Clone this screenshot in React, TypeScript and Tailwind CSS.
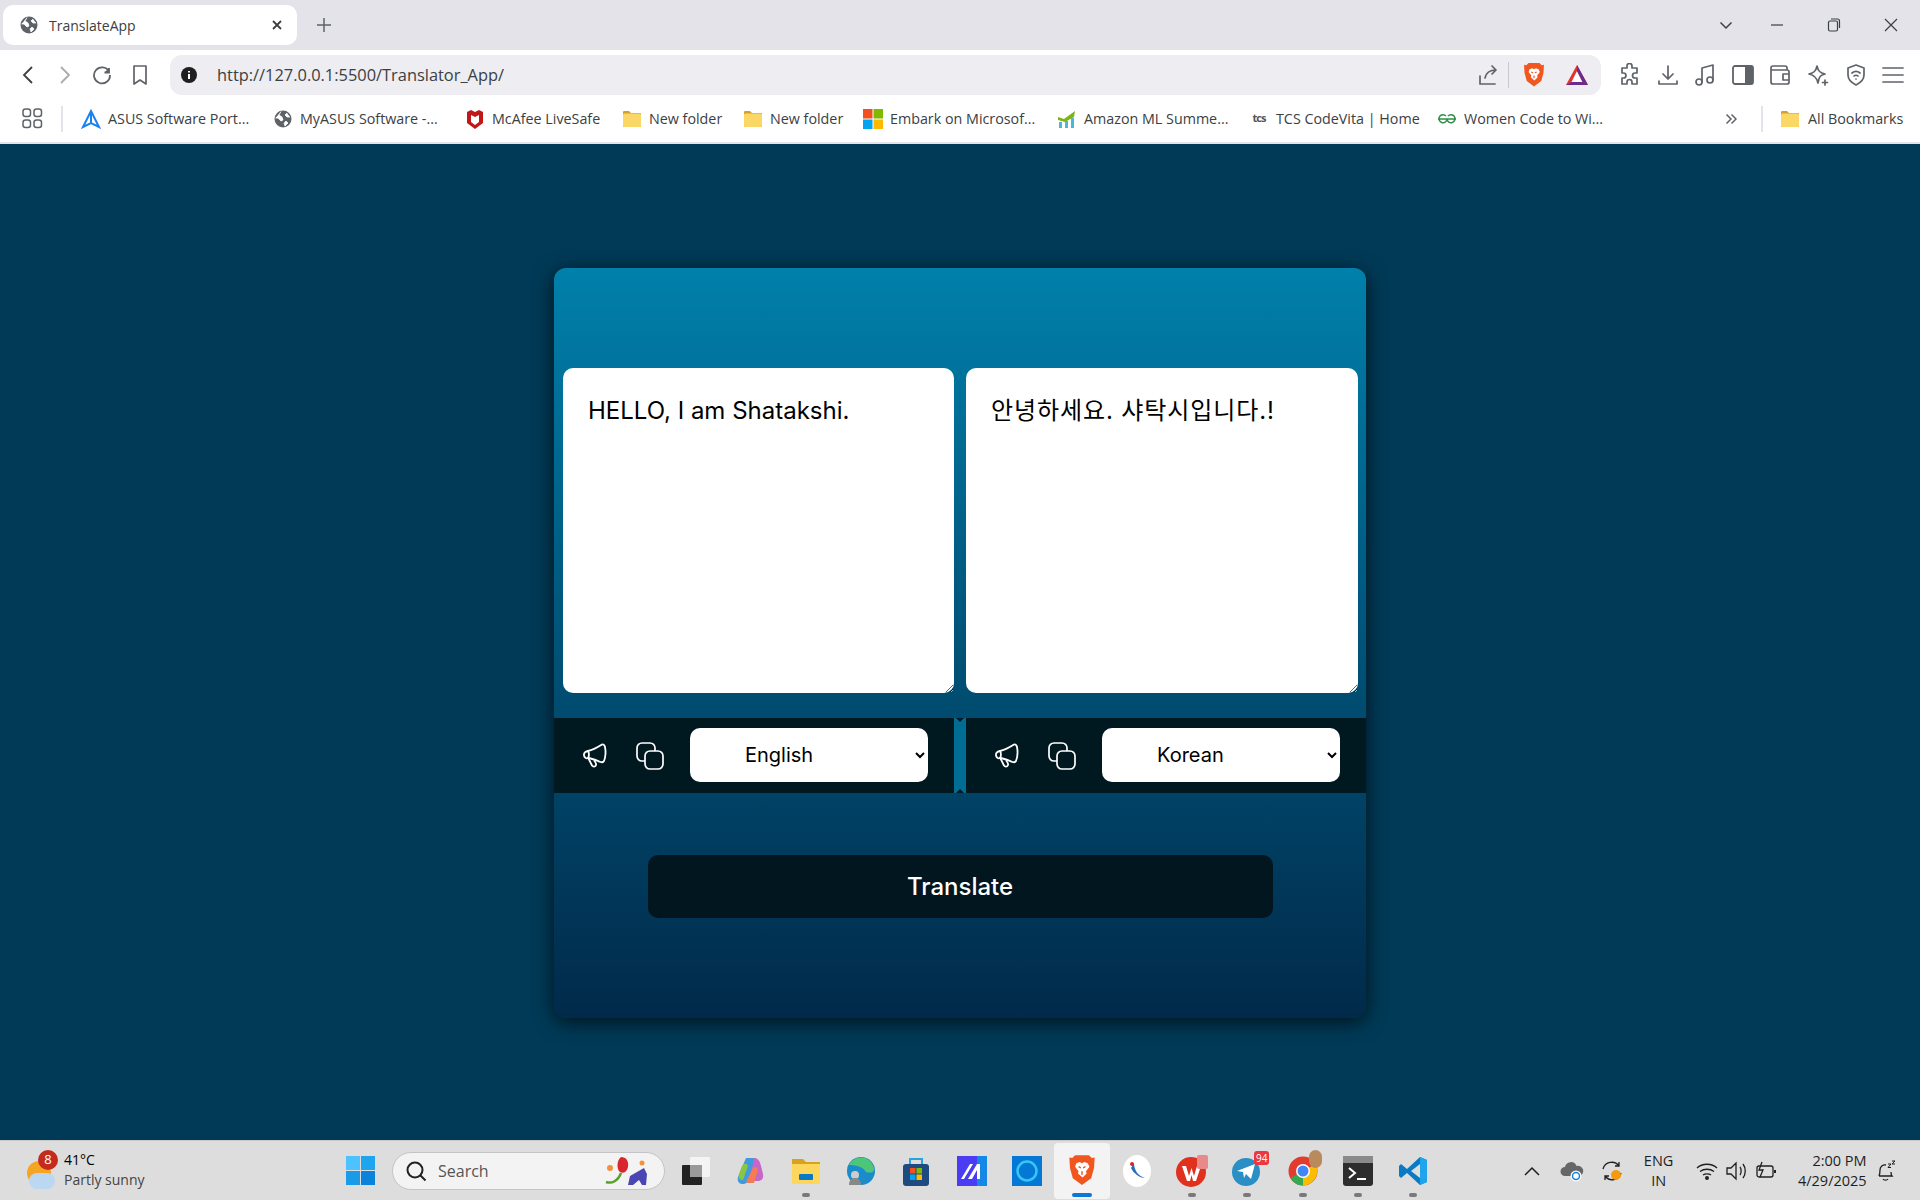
const chrome = "font-['Open_Sans','Noto_Sans',sans-serif]";

function Globe({ size = 18 }: { size?: number }) {
  return (
    <svg width={size} height={size} viewBox="0 0 18 18">
      <circle cx="9" cy="9" r="8.5" fill="#5f6368" />
      <path d="M7 1.5 5 5l3 2 1 3-2 1-3-3-2.500 0M13 3l-2 2 2 2 3 0M12 11l-2 2 1 3 3-3z" fill="#fff" stroke="#fff" strokeWidth="0.8" />
    </svg>
  );
}

function Folder() {
  return (
    <svg width="20" height="20" viewBox="0 0 20 20">
      <path d="M1 3a1 1 0 0 1 1-1h5l2 2h9a1 1 0 0 1 1 1v12a1 1 0 0 1-1 1H2a1 1 0 0 1-1-1z" fill="#d7a02b" />
      <rect x="1" y="4.500" width="18" height="13.500" rx="1.500" fill="#fbd866" />
    </svg>
  );
}

function Bookmark({ icon, label, w, ml }: { icon: React.ReactNode; label: string; w: string; ml: string }) {
  return (
    <div className={`flex shrink-0 items-center gap-[7px] ${ml}`}>
      <span className="flex w-[20px] justify-center">{icon}</span>
      <span className={`whitespace-nowrap text-[14.300px] text-[#3c4043] ${w}`}>{label}</span>
    </div>
  );
}

function ToolIcon({ children }: { children: React.ReactNode }) {
  return (
    <svg width="24" height="24" viewBox="0 0 24 24" fill="none" stroke="#5f6368" strokeWidth="1.700" strokeLinecap="round" strokeLinejoin="round">
      {children}
    </svg>
  );
}

function BraveIcon({ size = 24 }: { size?: number }) {
  return (
    <svg width={size} height={size * 1.150} viewBox="0 0 24 28">
      <path d="M6 1h12l2.500 2.500L23 3l-.5 9-2.500 9-8 6-8-6-2.500-9L1 3l2.500.5z" fill="#f1561f" />
      <path d="M7 8l3-1 2 1 2-1 3 1 1.500 3-3 4 .5 2-3.500 3.500L8.500 17l.5-2-3-4z" fill="#fff" />
      <path d="M9 11l2 1M15 11l-2 1M12 15v3" stroke="#f1561f" strokeWidth="1.300" />
    </svg>
  );
}

function BrowserChrome() {
  return (
    <header className={`${chrome} shrink-0`}>
      <div className="flex h-[50px] items-end bg-[#e3e3e9] pb-[5px] pl-[3px]">
        <div className="flex h-[40px] w-[294px] items-center rounded-[10px] bg-white pl-[17px] pr-[13px]">
          <Globe />
          <span className="ml-[11px] flex-1 text-[14px] text-[#3c4043]">TranslateApp</span>
          <svg width="14" height="14" viewBox="0 0 14 14" stroke="#3c4043" strokeWidth="1.800"><path d="M3 3l8 8M11 3l-8 8" /></svg>
        </div>
        <svg className="mb-[12px] ml-[19px]" width="16" height="16" viewBox="0 0 16 16" stroke="#5f6368" strokeWidth="1.500"><path d="M8 1v14M1 8h14" /></svg>
        <div className="ml-auto mb-[13px] flex items-center">
          <svg width="14" height="14" viewBox="0 0 14 14" fill="none" stroke="#3c4043" strokeWidth="1.500"><path d="M1.500 4.500 7 10l5.500-5.500" /></svg>
          <svg className="ml-[37px]" width="14" height="14" viewBox="0 0 14 14" stroke="#3c4043" strokeWidth="1.200"><path d="M1 7h12" /></svg>
          <svg className="ml-[43px]" width="14" height="14" viewBox="0 0 14 14" fill="none" stroke="#3c4043" strokeWidth="1.200"><rect x="1.500" y="3" width="9" height="10" rx="1.500" /><path d="M4 1h6.500A2 2 0 0 1 12.500 3v7" /></svg>
          <svg className="ml-[43px] mr-[22px]" width="14" height="14" viewBox="0 0 14 14" stroke="#3c4043" strokeWidth="1.200"><path d="M1 1l12 12M13 1 1 13" /></svg>
        </div>
      </div>
      <div className="flex h-[45px] items-start bg-white pt-[5px]">
        <div className="flex h-[40px] w-[149px] items-center pl-[20px]">
          <svg width="16" height="22" viewBox="0 0 16 22" fill="none" stroke="#3c4043" strokeWidth="1.800"><path d="M12 3 4 11l8 8" /></svg>
          <svg className="ml-[21px]" width="16" height="22" viewBox="0 0 16 22" fill="none" stroke="#a9abaf" strokeWidth="1.800"><path d="m4 3 8 8-8 8" /></svg>
          <svg className="ml-[19px]" width="20" height="20" viewBox="0 0 20 20" fill="none" stroke="#5f6368" strokeWidth="1.800"><path d="M17 6.500A8 8 0 1 0 18 10" /><path d="M17 3v4.500h-4.500" fill="#5f6368" /></svg>
          <svg className="ml-[20px]" width="16" height="22" viewBox="0 0 16 22" fill="none" stroke="#5f6368" strokeWidth="1.700" strokeLinejoin="round"><path d="M2 2h12v18l-6-4-6 4z" /></svg>
        </div>
        <div className="ml-[21px] flex h-[40px] w-[1431px] items-center rounded-[12px] bg-[#ededf2] pl-[11px] pr-[12px]">
          <svg width="16" height="16" viewBox="0 0 16 16"><circle cx="8" cy="8" r="8" fill="#1f1f1f" /><path d="M8 4v1.500M8 7v5" stroke="#fff" strokeWidth="2" /></svg>
          <span className="ml-[20px] flex-1 text-[16.400px] text-[#3c4043]">http://127.0.0.1:5500/Translator_App/</span>
          <ToolIcon><path d="M4 13v8h15M9 15c1-5 5-8 11-8M16 3l4 4-4 4" /></ToolIcon>
          <span className="ml-[8px] mr-[14px] h-[26px] w-px bg-[#c8c8ce]" />
          <BraveIcon size={22} />
          <svg className="ml-[20px]" width="24" height="22" viewBox="0 0 24 22">
            <path d="M12 1 1 21h22z" fill="#e2342e" />
            <path d="M12 7 6.500 18h11z" fill="#fff" />
            <path d="M1 21h22l-5.500-3h-11z" fill="#6a2c8f" />
            <path d="M12 1v6l5.500 11 5.500 3z" fill="#6a2c8f" />
          </svg>
        </div>
        <div className="ml-[17px] flex h-[40px] items-center gap-[13.600px]">
          <ToolIcon><path d="M9 3a2.500 2.500 0 0 1 5 0v2h5v5h-2a2.500 2.500 0 0 0 0 5h2v6h-5v-2a2.500 2.500 0 0 0-5 0v2H4v-6h1.500a2.500 2.500 0 0 0 0-5H4V5h5z" /></ToolIcon>
          <ToolIcon><path d="M12 3v13M7 11l5 5 5-5M3 18v3h18v-3" /></ToolIcon>
          <ToolIcon><path d="M9 19V5l11-3v15" /><circle cx="6" cy="19" r="3" /><circle cx="17" cy="17" r="3" /></ToolIcon>
          <svg width="24" height="24" viewBox="0 0 24 24"><rect x="2" y="3" width="20" height="18" rx="2" fill="none" stroke="#5f6368" strokeWidth="1.800" /><rect x="14" y="3" width="8" height="18" fill="#5f6368" /></svg>
          <ToolIcon><path d="M19 7V5a2 2 0 0 0-2-2H5a2 2 0 0 0-2 2v14a2 2 0 0 0 2 2h14a2 2 0 0 0 2-2v-2M3 7h16a2 2 0 0 1 2 2v8h-6v-6h6" /></ToolIcon>
          <ToolIcon><path d="M11 3c1 5 3 7 8 8-5 1-6 3-7 9-1-5-4-8-9-9 5-1 7-3 8-8zM19 17v5M16.500 19.500h5" /></ToolIcon>
          <ToolIcon><path d="M12 2l8 3v7c0 5-4 8-8 10-4-2-8-5-8-10V5zM8 10c2.500-2 5.500-2 8 0M10 13c1-1 3-1 4 0M12 16h.01" /></ToolIcon>
          <ToolIcon><path d="M2 5h20M2 12h20M2 19h20" /></ToolIcon>
        </div>
      </div>
      <div className="flex h-[49px] items-center border-b-2 border-[#e3e3e9] bg-white pl-[22px]">
        <svg width="21" height="21" viewBox="0 0 21 21" fill="none" stroke="#5f6368" strokeWidth="1.500"><rect x="1" y="1" width="7.500" height="7.500" rx="2.500" /><rect x="12" y="1" width="7.500" height="7.500" rx="2.500" /><rect x="1" y="12" width="7.500" height="7.500" rx="2.500" /><rect x="12" y="12" width="7.500" height="7.500" rx="2.500" /></svg>
        <span className="ml-[18px] h-[26px] w-[2px] bg-[#e3e3e9]" />
        <Bookmark ml="ml-[18px]" w="w-[141px]" label="ASUS Software Port..." icon={<svg width="20" height="20" viewBox="0 0 20 20" fill="none" stroke="#1a82f0" strokeWidth="2"><path d="M10 2 2 18l8-4 8 4zM10 2v12" /></svg>} />
        <Bookmark ml="ml-[24px]" w="w-[141px]" label="MyASUS Software -..." icon={<Globe />} />
        <Bookmark ml="ml-[24px]" w="w-[109px]" label="McAfee LiveSafe" icon={<svg width="18" height="20" viewBox="0 0 18 20"><path d="M1 3l4-2 4 2 4-2 4 2v11l-8 6-8-6z" fill="#c01818" /><path d="M5 6l4 2 4-2v7l-4 3-4-3z" fill="#fff" /></svg>} />
        <Bookmark ml="ml-[21px]" w="w-[73px]" label="New folder" icon={<Folder />} />
        <Bookmark ml="ml-[21px]" w="w-[74px]" label="New folder" icon={<Folder />} />
        <Bookmark ml="ml-[19px]" w="w-[145px]" label="Embark on Microsof..." icon={
          <svg width="20" height="20" viewBox="0 0 20 20"><rect width="9.500" height="9.500" fill="#f25022" /><rect x="10.500" width="9.500" height="9.500" fill="#7fba00" /><rect y="10.500" width="9.500" height="9.500" fill="#00a4ef" /><rect x="10.500" y="10.500" width="9.500" height="9.500" fill="#ffb900" /></svg>
        } />
        <Bookmark ml="ml-[22px]" w="w-[144px]" label="Amazon ML Summe..." icon={
          <svg width="20" height="18" viewBox="0 0 20 18"><path d="M1 7l6 2 11-8-1 6-9 5-7-2z" fill="#7cb518" /><rect x="2" y="12" width="3" height="6" fill="#4db6d6" /><rect x="8" y="11" width="3" height="7" fill="#4db6d6" /><rect x="14" y="8" width="3" height="10" fill="#4db6d6" /></svg>
        } />
        <Bookmark ml="ml-[21px]" w="w-[141px]" label="TCS CodeVita | Home" icon={<span className="text-[11px] font-bold tracking-[-1px] text-[#555]">tcs</span>} />
        <Bookmark ml="ml-[20px]" w="w-[141px]" label="Women Code to Wi..." icon={
          <svg width="20" height="12" viewBox="0 0 20 12" fill="none" stroke="#2f8d46" strokeWidth="1.500"><path d="M10 6H1M10 6h9M9 3a4 4 0 1 0 1 3M11 3a4 4 0 1 1-1 3" /></svg>
        } />
        <svg className="ml-[120px]" width="12" height="12" viewBox="0 0 12 12" fill="none" stroke="#5f6368" strokeWidth="1.500"><path d="m1.500 1.500 4.500 4.500-4.500 4.500M6.500 1.500l4.500 4.500-4.500 4.500" /></svg>
        <span className="ml-[24px] h-[26px] w-[2px] bg-[#e3e3e9]" />
        <span className="ml-[17px]"><Folder /></span>
        <span className="ml-[8px] whitespace-nowrap text-[14.300px] text-[#3c4043]">All Bookmarks</span>
      </div>
    </header>
  );
}

function MegaphoneIcon() {
  return (
    <svg width="26" height="26" viewBox="0 0 26 26" fill="none" stroke="#fff" strokeWidth="1.800" strokeLinejoin="round" strokeLinecap="round">
      <path d="M6 8c5-1 10-4 14-6.500 1.500-.5 2.500.5 3 2.500 1 5 .5 10-1 14-.8 1.500-2 1.500-3.500 1-4-1.500-8-3.500-12.500-4" />
      <path d="M6 8c-3 .5-4.500 2.500-4 4.500s2 3.500 4 2.500c1-1 1.500-5 0-7z" />
      <path d="M6.500 15.500l3.500 7c1 1.500 3.500 1.500 4-.5.3-1 0-2-1.500-4" />
    </svg>
  );
}

function CopyIcon() {
  return (
    <svg width="28" height="28" viewBox="0 0 28 28" fill="none" stroke="#fff" strokeWidth="1.700">
      <path d="M9 19H6a5 5 0 0 1-5-5V6a5 5 0 0 1 5-5h8a5 5 0 0 1 5 5v3" />
      <rect x="9" y="9" width="18" height="18" rx="5" />
    </svg>
  );
}

function Controls({ lang }: { lang: string }) {
  return (
    <div className="flex h-full w-[400px] items-center bg-[#001820] pl-[28px] pr-[26px]">
      <MegaphoneIcon />
      <span className="ml-[28px]"><CopyIcon /></span>
      <select
        defaultValue={lang}
        className="mb-[1px] ml-[26px] h-[54px] w-[238px] rounded-[10px] bg-white pl-[51px] text-left text-[20px] text-black outline-none"
      >
        <option>English</option>
        <option>Korean</option>
        <option>Hindi</option>
      </select>
    </div>
  );
}

function TranslatorCard() {
  return (
    <div className="flex h-[750px] w-[812px] flex-col rounded-[12px] bg-gradient-to-b from-[#0080ab] to-[#012a4a] pt-[100px] font-['Inter','Noto_Sans_CJK_KR',sans-serif] shadow-[0_4px_20px_rgba(0,0,0,0.7)]">
      <div className="flex justify-between pl-[9px] pr-[8px]">
        <textarea
          readOnly
          value="HELLO, I am Shatakshi."
          className="h-[325px] w-[391px] rounded-[10px] bg-white px-[25px] py-[25px] text-[24px] leading-[36px] text-black outline-none"
        />
        <textarea
          readOnly
          value="안녕하세요. 샤탁시입니다.!"
          className="h-[325px] w-[392px] rounded-[10px] bg-white px-[25px] py-[25px] text-[24px] leading-[36px] tracking-[0.9px] text-black outline-none"
        />
      </div>
      <div className="mt-[25px] flex h-[75px]">
        <Controls lang="English" />
        <div className="relative w-[12px] bg-[#006d94]">
          <span className="absolute left-[2px] top-0 h-0 w-0 border-x-4 border-t-4 border-x-transparent border-t-[#001820]" />
          <span className="absolute bottom-0 left-[2px] h-0 w-0 border-x-4 border-b-4 border-x-transparent border-b-[#001820]" />
        </div>
        <Controls lang="Korean" />
      </div>
      <button className="mx-auto mt-[62px] h-[63px] w-[625px] rounded-[10px] bg-[#02161f] text-[24px] font-medium text-white">
        Translate
      </button>
    </div>
  );
}

function TaskIcon({ children, dot, active }: { children: React.ReactNode; dot?: boolean; active?: boolean }) {
  return (
    <div className={`relative flex h-[56px] w-[55.200px] items-center justify-center ${active ? "rounded-[4px] bg-[#f3f3f3]" : ""}`}>
      {children}
      {dot && <span className="absolute bottom-[2px] h-[4px] w-[8px] rounded-full bg-[#7a7a7a]" />}
      {active && <span className="absolute bottom-[2px] h-[4px] w-[20px] rounded-full bg-[#0a78d4]" />}
    </div>
  );
}

function Taskbar() {
  return (
    <footer className={`${chrome} flex h-[60px] shrink-0 items-center border-t border-[#c9c9c9] bg-[#dddddd]`}>
      <div className="relative ml-[27px] h-[36px] w-[30px]">
        <span className="absolute left-0 top-[8px] h-[24px] w-[24px] rounded-full bg-[#f5a524]" />
        <span className="absolute bottom-0 left-[2px] h-[16px] w-[26px] rounded-full bg-[#bcd7f2]" />
        <span className="absolute left-[11px] top-[-3px] flex h-[20px] w-[20px] items-center justify-center rounded-full bg-[#c42b1c] text-[13px] text-white">8</span>
      </div>
      <div className="mb-[2px] ml-[7px] w-[100px] text-[14px] leading-[20px] text-[#444]">
        <div className="text-black">41°C</div>
        <div>Partly sunny</div>
      </div>
      <svg className="ml-[182px]" width="29" height="29" viewBox="0 0 29 29">
        <rect width="14" height="14" fill="#4cc2ff" /><rect x="15" width="14" height="14" fill="#1fa5ee" /><rect y="15" width="14" height="14" fill="#1a9be8" /><rect x="15" y="15" width="14" height="14" fill="#0b82dc" />
      </svg>
      <div className="ml-[17px] flex h-[38px] w-[273px] items-center rounded-full border border-[#c4c4c4] bg-[#f3f3f3] pl-[12px] pr-[10px]">
        <svg width="22" height="22" viewBox="0 0 22 22" fill="none" stroke="#222" strokeWidth="2"><circle cx="10" cy="10" r="7.500" /><path d="m15.500 15.500 5 5" /></svg>
        <span className="ml-[11px] flex-1 text-[16px] text-[#555]">Search</span>
        <svg width="52" height="32" viewBox="0 0 52 32">
          <path d="M4 27c6 2 12-1 15-9" fill="none" stroke="#5aa02c" strokeWidth="2.500" />
          <path d="M19 2c5 0 8 4 7 10-1 5-5 7-8 5s-4-11 1-15z" fill="#d8262c" />
          <path d="M26 30l2-9 14-8 3 6-1 11h-4l-3-5-6 5z" fill="#4a47b5" />
          <circle cx="8" cy="13" r="3" fill="#f0923e" /><circle cx="40" cy="8" r="2.500" fill="#f0923e" />
        </svg>
      </div>
      <div className="ml-[3px] flex items-center">
        <TaskIcon>
          <svg width="30" height="30" viewBox="0 0 30 30"><rect x="1" y="9" width="20" height="20" rx="1" fill="#222" /><rect x="9" y="1" width="20" height="20" rx="1" fill="#f4f4f4" /><rect x="9" y="9" width="12" height="12" fill="#9a9a9a" /></svg>
        </TaskIcon>
        <TaskIcon>
          <svg width="30" height="30" viewBox="0 0 30 30"><path d="M10 2h8c3 0 3 3 1 6l-5 14c-1 4-4 6-8 6-3 0-5-3-4-7z" fill="#3f9bdb" /><path d="M18 2c4 0 6 3 7 8l2 8c1 5-2 7-5 7h-6c-3 0-4-3-2-7l3-10z" fill="#c766c9" /><path d="M6 10c2-3 5-3 6 0l-5 14c-3 0-5-2-4-6z" fill="#8ac646" /><path d="M18 27h-6c-2 0-2-2-1-3l6-12c1-2 5-1 5 2z" fill="#f47b52" /></svg>
        </TaskIcon>
        <TaskIcon dot>
          <svg width="30" height="30" viewBox="0 0 30 30"><path d="M1 3h11l3 3h14v22H1z" fill="#d9a11f" /><rect x="1" y="8" width="28" height="20" fill="#fcd75b" /><rect x="8" y="18" width="14" height="6" rx="1" fill="#0a78c4" /></svg>
        </TaskIcon>
        <TaskIcon>
          <svg width="30" height="30" viewBox="0 0 30 30"><circle cx="15" cy="15" r="14" fill="#1b8bc9" /><path d="M3 9C8-1 24-2 28 12c1 5-4 5-8 4-3-5-9-7-17-7z" fill="#4ec67a" /><circle cx="9" cy="19" r="4" fill="#ccc" /><path d="M3 29c0-5 3-7 6-7s6 2 6 7z" fill="#888" /></svg>
        </TaskIcon>
        <TaskIcon>
          <svg width="30" height="30" viewBox="0 0 30 30"><rect x="2" y="8" width="26" height="22" rx="3" fill="#1f4a7f" /><path d="M9 8V3h12v5" fill="none" stroke="#27a3e2" strokeWidth="2" /><rect x="9" y="12" width="5.500" height="5.500" fill="#f25022" /><rect x="15.500" y="12" width="5.500" height="5.500" fill="#7fba00" /><rect x="9" y="18.500" width="5.500" height="5.500" fill="#00a4ef" /><rect x="15.500" y="18.500" width="5.500" height="5.500" fill="#ffb900" /></svg>
        </TaskIcon>
        <TaskIcon>
          <svg width="30" height="30" viewBox="0 0 30 30"><rect width="30" height="30" fill="#4a3cf2" /><rect x="20" width="10" height="30" fill="#1587e6" /><path d="M4 23 13 8h3L7 23zM11 23l9-15h3v15h-3v-9l-5 9z" fill="#fff" /></svg>
        </TaskIcon>
        <TaskIcon>
          <svg width="30" height="30" viewBox="0 0 30 30"><rect width="30" height="30" fill="#0478d4" /><circle cx="15" cy="15" r="9.500" fill="none" stroke="#38c6f4" strokeWidth="2.500" /></svg>
        </TaskIcon>
        <TaskIcon active>
          <BraveIcon size={28} />
        </TaskIcon>
        <TaskIcon>
          <svg width="30" height="34" viewBox="0 0 30 34"><ellipse cx="15" cy="17" rx="14" ry="16" fill="#fff" /><path d="M12 9c0 7 4 13 11 15-5 0-12-5-14-10z" fill="#2a6cb8" /><circle cx="10" cy="10" r="2" fill="#d8262c" /></svg>
        </TaskIcon>
        <TaskIcon dot>
          <svg width="32" height="32" viewBox="0 0 32 32"><circle cx="15" cy="17" r="15" fill="#e0311e" /><path d="M6 11h4l3 10 2.500-8 2.500 8 3-10h4l-5 15h-3l-1.500-6-1.500 6h-3z" fill="#fff" /><rect x="21" y="0" width="11" height="14" rx="2" fill="#e98a8a" /></svg>
        </TaskIcon>
        <TaskIcon dot>
          <div className="relative">
            <svg width="30" height="30" viewBox="0 0 30 30"><circle cx="14" cy="16" r="14" fill="#2a8fc4" /><path d="M5 15 23 8l-4 15-5-5-2 4-1-6z" fill="#fff" /></svg>
            <span className="absolute right-[-7px] top-[-5px] rounded-[3px] bg-[#e9383f] px-[2px] text-[10px] leading-[14px] text-white">94</span>
          </div>
        </TaskIcon>
        <TaskIcon dot>
          <div className="relative">
            <svg width="30" height="30" viewBox="0 0 30 30"><circle cx="15" cy="15" r="14.500" fill="#e33b2e" /><path d="M15 15 2.500 22A14.500 14.500 0 0 0 15 29.500z" fill="#34a853" /><path d="M15 15l12.500-7a14.500 14.500 0 0 1-12.500 21.500z" fill="#fbbc05" /><circle cx="15" cy="15" r="7" fill="#fff" /><circle cx="15" cy="15" r="5.500" fill="#4285f4" /></svg>
            <span className="absolute right-[-4px] top-[-6px] h-[18px] w-[13px] rounded-full bg-[#b98a5c]" />
          </div>
        </TaskIcon>
        <TaskIcon dot>
          <svg width="30" height="30" viewBox="0 0 30 30"><rect width="30" height="30" rx="3" fill="#2d2d2d" /><rect width="30" height="7" fill="#8a8a8a" /><path d="M6 12l6 5-6 5" fill="none" stroke="#fff" strokeWidth="2" /><path d="M14 23h9" stroke="#fff" strokeWidth="2" /></svg>
        </TaskIcon>
        <TaskIcon dot>
          <svg width="30" height="30" viewBox="0 0 30 30"><path d="M22 1 9 13 3 8 1 10v10l2 2 6-5 13 12 7-3V4z" fill="#0a7ac4" /><path d="M22 1l7 3v22l-7 3z" fill="#1fa5ee" /><path d="M22 8v14l-9-7z" fill="#dddddd" /></svg>
        </TaskIcon>
      </div>
      <div className="ml-[83px] flex items-center text-[#1f1f1f]">
        <svg width="16" height="10" viewBox="0 0 16 10" fill="none" stroke="#1f1f1f" strokeWidth="1.500"><path d="m1 9 7-7 7 7" /></svg>
        <svg className="ml-[20px]" width="24" height="22" viewBox="0 0 24 22"><path d="M5 16a4.500 4.500 0 0 1 0-9 6 6 0 0 1 11.500-1 5 5 0 0 1 3 10z" fill="#666" /><circle cx="16" cy="16" r="5.500" fill="#fff" /><circle cx="16" cy="16" r="3.500" fill="none" stroke="#1a82e0" strokeWidth="1.500" /></svg>
        <svg className="ml-[16px]" width="24" height="24" viewBox="0 0 24 24" fill="none" stroke="#1f1f1f" strokeWidth="1.300"><path d="M3 10a9 9 0 0 1 16-3M19 3v4h-4M21 14a9 9 0 0 1-16 3M5 21v-4h4" /><circle cx="16" cy="16" r="5" fill="#f59a0e" stroke="none" /></svg>
        <div className="ml-[11px] w-[48px] text-center text-[14.500px] leading-[20px]">ENG<br />IN</div>
        <svg className="ml-[13px]" width="22" height="18" viewBox="0 0 22 18" fill="none" stroke="#1f1f1f" strokeWidth="1.300"><path d="M1 6c5-5 15-5 20 0M4 9.500c4-3 10-3 14 0M7 13c2-1.500 6-1.500 8 0" /><circle cx="11" cy="16" r="1.300" fill="#1f1f1f" /></svg>
        <svg className="ml-[8px]" width="22" height="20" viewBox="0 0 22 20" fill="none" stroke="#1f1f1f" strokeWidth="1.300"><path d="M1 7v6h4l5 5V2L5 7zM14 6c1.500 2 1.500 6 0 8M17 3c3 4 3 10 0 14" /></svg>
        <svg className="ml-[7px]" width="22" height="20" viewBox="0 0 22 20" fill="none" stroke="#1f1f1f" strokeWidth="1.300"><rect x="2" y="5" width="16" height="11" rx="2" /><path d="M20 9v3" strokeWidth="2" /><path d="M7 1 4 9h4l-3 7" /></svg>
        <div className="w-[90px] text-right text-[14.500px] leading-[20px]">2:00 PM<br />4/29/2025</div>
        <svg className="ml-[9px]" width="20" height="22" viewBox="0 0 20 22" fill="none" stroke="#1f1f1f" strokeWidth="1.300"><path d="M3 16c1-2 1-4 1-6a5 5 0 0 1 6-5M3 16h13c-1-1-1-2-1-4M7 19c1 1.500 4 1.500 5 0" /><path d="M12 4h3l-3 3.500h3M16 1h3l-3 3h3" strokeWidth="1" /></svg>
      </div>
    </footer>
  );
}

export default function App() {
  return (
    <div className="flex h-[1200px] w-full flex-col overflow-hidden bg-[#003a57]">
      <BrowserChrome />
      <main className="flex flex-1 justify-center pt-[124px]">
        <TranslatorCard />
      </main>
      <Taskbar />
    </div>
  );
}
